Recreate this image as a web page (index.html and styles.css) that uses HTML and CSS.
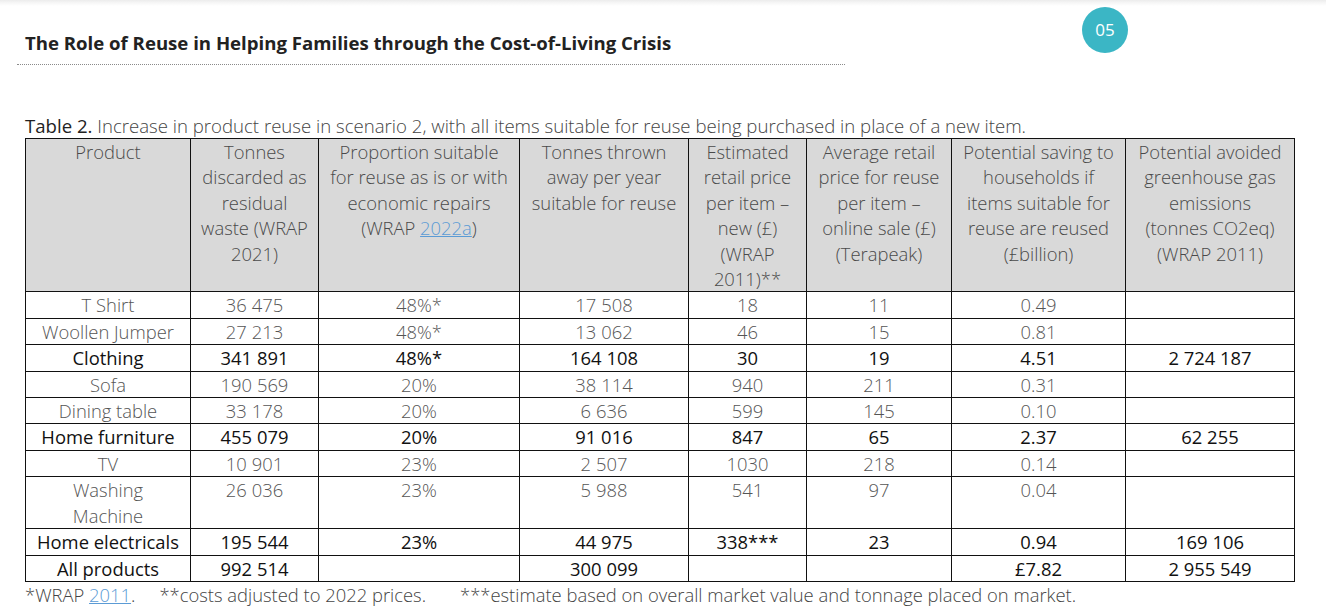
FILE: index.html
```html
<!DOCTYPE html>
<html lang="en">
<head>
<meta charset="utf-8">
<title>The Role of Reuse</title>
<link rel="stylesheet" href="styles.css">
</head>
<body>
<div class="page">
  <header class="top">
    <div class="title-block">
      <h1 class="title">The Role of Reuse in Helping Families through the Cost-of-Living Crisis</h1>
    </div>
    <div class="badge">05</div>
  </header>

  <div class="caption"><span class="cap-label">Table 2.</span> Increase in product reuse in scenario 2, with all items suitable for reuse being purchased in place of a new item.</div>

  <table class="data">
    <colgroup>
      <col class="c1"><col class="c2"><col class="c3"><col class="c4"><col class="c5"><col class="c6"><col class="c7"><col class="c8">
    </colgroup>
    <thead>
      <tr>
        <th>Product</th>
        <th>Tonnes<br>discarded as<br>residual<br>waste (WRAP<br>2021)</th>
        <th>Proportion suitable<br>for reuse as is or with<br>economic repairs<br>(WRAP <span class="link">2022a</span>)</th>
        <th>Tonnes thrown<br>away per year<br>suitable for reuse</th>
        <th>Estimated<br>retail price<br>per item –<br>new (£)<br>(WRAP<br>2011)**</th>
        <th>Average retail<br>price for reuse<br>per item –<br>online sale (£)<br>(Terapeak)</th>
        <th>Potential saving to<br>households if<br>items suitable for<br>reuse are reused<br>(£billion)</th>
        <th>Potential avoided<br>greenhouse gas<br>emissions<br>(tonnes CO2eq)<br>(WRAP 2011)</th>
      </tr>
    </thead>
    <tbody>
      <tr><td>T Shirt</td><td>36 475</td><td>48%*</td><td>17 508</td><td>18</td><td>11</td><td>0.49</td><td></td></tr>
      <tr><td>Woollen Jumper</td><td>27 213</td><td>48%*</td><td>13 062</td><td>46</td><td>15</td><td>0.81</td><td></td></tr>
      <tr class="sum"><td>Clothing</td><td>341 891</td><td>48%*</td><td>164 108</td><td>30</td><td>19</td><td>4.51</td><td>2 724 187</td></tr>
      <tr><td>Sofa</td><td>190 569</td><td>20%</td><td>38 114</td><td>940</td><td>211</td><td>0.31</td><td></td></tr>
      <tr><td>Dining table</td><td>33 178</td><td>20%</td><td>6 636</td><td>599</td><td>145</td><td>0.10</td><td></td></tr>
      <tr class="sum"><td>Home furniture</td><td>455 079</td><td>20%</td><td>91 016</td><td>847</td><td>65</td><td>2.37</td><td>62 255</td></tr>
      <tr><td>TV</td><td>10 901</td><td>23%</td><td>2 507</td><td>1030</td><td>218</td><td>0.14</td><td></td></tr>
      <tr><td>Washing<br>Machine</td><td>26 036</td><td>23%</td><td>5 988</td><td>541</td><td>97</td><td>0.04</td><td></td></tr>
      <tr class="sum"><td>Home electricals</td><td>195 544</td><td>23%</td><td>44 975</td><td>338***</td><td>23</td><td>0.94</td><td>169 106</td></tr>
      <tr class="sum"><td>All products</td><td>992 514</td><td></td><td>300 099</td><td></td><td></td><td>£7.82</td><td>2 955 549</td></tr>
    </tbody>
  </table>

  <div class="notes">*WRAP <span class="link">2011</span>.<span class="gap"></span>**costs adjusted to 2022 prices.<span class="gap gap-wide"></span>***estimate based on overall market value and tonnage placed on market.</div>
</div>
</body>
</html>
```
FILE: styles.css
```css
html, body {
  margin: 0;
  padding: 0;
  background: #ffffff;
}

body {
  font-family: "Open Sans", "Noto Sans", "Liberation Sans", sans-serif;
  color: #555;
}

.page {
  width: 1326px;
  height: 610px;
  overflow: hidden;
  background: linear-gradient(#ececec 0, #f7f7f7 3px, #ffffff 6px);
}

.top {
  display: flex;
  align-items: flex-start;
}

.title-block {
  margin-left: 17px;
  width: 828px;
  padding: 31px 0 9px 8px;
  box-sizing: border-box;
  border-bottom: 1px dotted #8a8a8a;
}

.title {
  margin: 0;
  font-size: 18.6px;
  line-height: 24px;
  font-weight: 700;
  color: #222;
  white-space: nowrap;
}

.badge {
  margin-left: 237px;
  margin-top: 7px;
  width: 46px;
  height: 46px;
  border-radius: 50%;
  background: #3bb6c5;
  color: #fff;
  font-size: 17px;
  line-height: 46px;
  text-align: center;
  font-weight: 400;
}

.caption {
  margin-top: 49px;
  padding-left: 25px;
  font-size: 18.6px;
  line-height: 24px;
  font-weight: 300;
  color: #444;
  white-space: nowrap;
}

.cap-label {
  font-weight: 400;
  color: #222;
}

.data {
  margin-left: 25px;
  margin-top: 0;
  width: 1269px;
  border-collapse: collapse;
  table-layout: fixed;
  font-size: 18.4px;
  font-weight: 300;
}

.c1 { width: 165px; }
.c2 { width: 128px; }
.c3 { width: 201px; }
.c4 { width: 169px; }
.c5 { width: 118px; }
.c6 { width: 145px; }
.c7 { width: 174px; }
.c8 { width: 169px; }

.data th,
.data td {
  border: 1px solid #111;
  padding: 0 2px;
  line-height: 25.4px;
  text-align: center;
  vertical-align: top;
  color: #555;
  font-weight: 300;
}

.data th {
  background: #d9d9d9;
  color: #4a4a4a;
  height: 152px;
  white-space: nowrap;
}

.data tr.sum td {
  color: #111;
  font-weight: 500;
}

.link {
  color: #5b9bd5;
  text-decoration: underline;
  text-decoration-thickness: 1px;
}

.notes {
  margin-top: 1px;
  padding-left: 25px;
  font-size: 18.4px;
  line-height: 24px;
  font-weight: 300;
  color: #444;
  white-space: nowrap;
}

.gap {
  display: inline-block;
  width: 24px;
}

.gap-wide {
  width: 34px;
}
```
